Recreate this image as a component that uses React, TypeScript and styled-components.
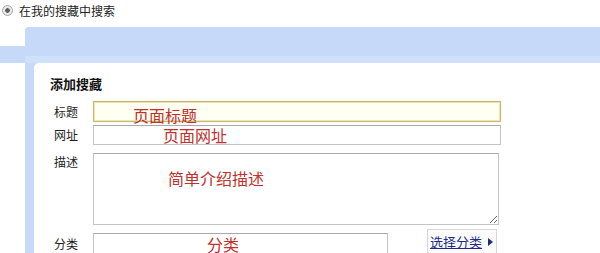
import * as React from "react";
import styled, { createGlobalStyle } from "styled-components";

const GlobalStyle = createGlobalStyle`
  html, body {
    margin: 0;
    padding: 0;
    background: #ffffff;
  }
  body {
    font-family: "Noto Sans CJK SC", "Liberation Sans", sans-serif;
    color: #222;
  }
`;

const PANEL_BLUE = "#c6d9f9";

const Page = styled.div`
  width: 600px;
  height: 253px;
  overflow: hidden;
`;

const SearchScope = styled.label`
  display: flex;
  align-items: flex-start;
  height: 27px;
  padding: 4px 0 0 2px;
  box-sizing: border-box;
  font-size: 12px;
  line-height: 14px;
  color: #222;
`;

const RadioDot = styled.span`
  width: 9px;
  height: 9px;
  margin-top: 1px;
  margin-right: 6px;
  border-radius: 50%;
  border: 1px solid #a8a8a8;
  background: radial-gradient(circle, #5d5d5d 0 2px, #e4e4e4 2.5px, #f6f6f6 100%);
  flex: none;
`;

const Panel = styled.div`
  display: grid;
  grid-template-columns: 25px 1fr;
`;

const TabStub = styled.div`
  margin-top: 19px;
  height: 17px;
  background: ${PANEL_BLUE};
`;

const Frame = styled.div`
  background: linear-gradient(${PANEL_BLUE} 0 29px, #cfe0fb 29px 36px, ${PANEL_BLUE} 36px);
  border-top-left-radius: 4px;
  padding: 36px 0 0 9px;
`;

const Card = styled.div`
  background: #ffffff;
  border-top-left-radius: 5px;
  padding: 13px 0 40px 16px;
`;

const Title = styled.h3`
  margin: 0 0 9px;
  font-size: 13px;
  line-height: 16px;
  font-weight: bold;
  color: #111;
`;

const Form = styled.div`
  padding-left: 4px;
  display: flex;
  flex-direction: column;
`;

const FormRow = styled.div<{ $top: number; $align?: string }>`
  display: flex;
  align-items: ${p => p.$align || "center"};
  margin-top: ${p => p.$top}px;
`;

const Label = styled.span<{ $pad?: number }>`
  width: 39px;
  flex: none;
  font-size: 12px;
  line-height: 14px;
  color: #1e1e1e;
  padding-top: ${p => p.$pad || 0}px;
`;

const Field = styled.div`
  position: relative;
  flex: none;
`;

const TextInput = styled.input<{ $w: number; $h: number; $focus?: boolean }>`
  display: block;
  box-sizing: border-box;
  width: ${p => p.$w}px;
  height: ${p => p.$h}px;
  margin: 0;
  padding: 0 3px;
  font-size: 12px;
  border: 1px solid ${p => (p.$focus ? "#c8b977" : "#c4c4c4")};
  border-top-color: ${p => (p.$focus ? "#c2b371" : "#a9a9a9")};
  background: ${p => (p.$focus ? "#fffff2" : "#ffffff")};
  box-shadow: ${p => (p.$focus ? "inset 0 0 0 1px #ece3b6, 0 0 2px #f1eac4" : "none")};
  outline: none;
`;

const TextArea = styled.textarea`
  display: block;
  box-sizing: border-box;
  width: 406px;
  height: 72px;
  margin: 0;
  padding: 2px 3px;
  font-size: 12px;
  border: 1px solid #c4c4c4;
  border-top-color: #a9a9a9;
  background: #ffffff;
  resize: both;
  outline: none;
`;

const Note = styled.span<{ $x: number; $y: number }>`
  position: absolute;
  left: ${p => p.$x}px;
  top: ${p => p.$y}px;
  font-size: 16px;
  line-height: 16px;
  color: #c0302c;
  white-space: nowrap;
  pointer-events: none;
`;

const PickButton = styled.a`
  display: flex;
  align-items: center;
  box-sizing: border-box;
  height: 26px;
  margin: -4px 0 0 39px;
  padding: 0 3px 0 2px;
  border: 1px solid #d6d6d6;
  background: #fbfbfb;
  font-size: 13px;
  line-height: 16px;
  color: #232a86;
  text-decoration: underline;
  cursor: pointer;
`;

const Arrow = styled.span`
  width: 0;
  height: 0;
  margin-left: 6px;
  border-top: 4px solid transparent;
  border-bottom: 4px solid transparent;
  border-left: 5px solid #1d2f72;
`;

export default function App() {
  return (
    <Page>
      <GlobalStyle />
      <SearchScope>
        <RadioDot />
        在我的搜藏中搜索
      </SearchScope>
      <Panel>
        <TabStub />
        <Frame>
          <Card>
            <Title>添加搜藏</Title>
            <Form>
              <FormRow $top={0}>
                <Label>标题</Label>
                <Field>
                  <TextInput $w={408} $h={21} $focus />
                  <Note $x={40} $y={6}>页面标题</Note>
                </Field>
              </FormRow>
              <FormRow $top={3}>
                <Label>网址</Label>
                <Field>
                  <TextInput $w={408} $h={20} />
                  <Note $x={70} $y={2}>页面网址</Note>
                </Field>
              </FormRow>
              <FormRow $top={8} $align="flex-start">
                <Label $pad={2}>描述</Label>
                <Field>
                  <TextArea />
                  <Note $x={75} $y={17}>简单介绍描述</Note>
                </Field>
              </FormRow>
              <FormRow $top={8} $align="flex-start">
                <Label $pad={4}>分类</Label>
                <Field>
                  <TextInput $w={295} $h={21} />
                  <Note $x={114} $y={3}>分类</Note>
                </Field>
                <PickButton>
                  选择分类
                  <Arrow />
                </PickButton>
              </FormRow>
            </Form>
          </Card>
        </Frame>
      </Panel>
    </Page>
  );
}
